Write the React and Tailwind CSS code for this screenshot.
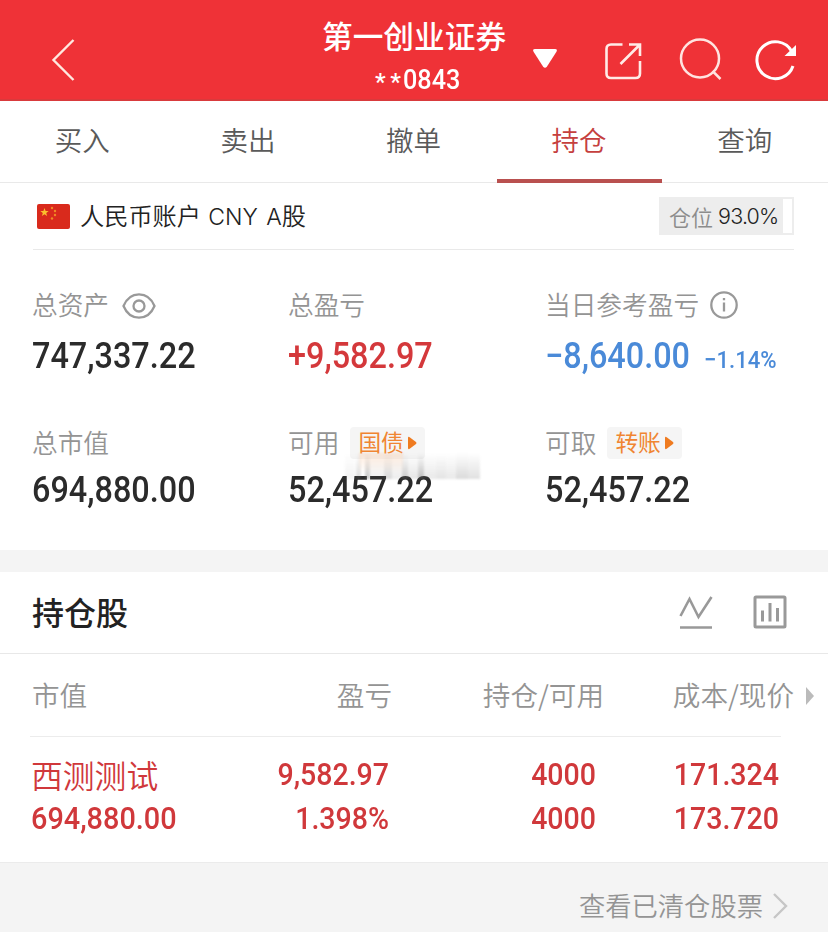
import React from 'react';
import clsx from 'clsx';

const tabs = ['买入', '卖出', '撤单', '持仓', '查询'];

const columns = [
  { label: '市值', className: 'w-[195px] text-left' },
  { label: '盈亏', className: 'w-[165px] text-right' },
  { label: '持仓/可用', className: 'w-[212px] text-right' },
  { label: '成本/现价', className: 'w-[190px] text-right' },
];

// Narrow figures, anchored on the side they are aligned to
const Num = ({ children, right, className }) => (
  <span
    className={clsx(
      "block whitespace-nowrap font-['Roboto',sans-serif] font-medium scale-x-[.9]",
      right ? 'origin-right' : 'origin-left',
      className
    )}
  >
    {children}
  </span>
);

const Header = () => (
  <header className="flex h-[101px] items-center border-b-2 border-[#d93a3c] bg-[#ef3237] text-white">
    <svg className="ml-[50px] mt-5 h-[44px] w-[28px]" viewBox="0 0 28 44" fill="none" stroke="#ffe9e0" strokeWidth="2.4">
      <path d="M23.500 2L3.500 22L23.500 42" />
    </svg>
    <div className="ml-[244px] flex w-[184px] flex-col items-center pt-[13px]">
      <div className="whitespace-nowrap text-[30.7px] font-medium leading-[44px]">第一创业证券</div>
      <div className="flex h-[42px] w-[184px] items-center pl-[53px] pt-[4px] font-['Roboto',sans-serif] leading-[42px]">
        <span className="w-[28px] shrink-0 pt-[4px] text-[24px] font-medium tracking-[4.5px]">**</span>
        <Num className="text-[28px]">0843</Num>
      </div>
    </div>
    <svg className="ml-[26px] mt-[18px] h-[22px] w-[26px]" viewBox="0 0 26 22" fill="#fff">
      <path d="M3 1H23Q26 1 24.3 4L15 18.5Q13 21 11 18.5L1.700 4Q0 1 3 1Z" />
    </svg>
    <svg className="ml-[46px] mt-[22px] h-[38px] w-[38px]" viewBox="0 0 38 38" fill="none" stroke="#ffebe7" strokeWidth="2.600">
      <path d="M18.500 2.500H7Q2.500 2.500 2.500 7V31.500Q2.500 36 7 36H31.500Q36 36 36 31.500V19" />
      <path d="M16.500 22L35 3.500M25 2.500H36V14" />
    </svg>
    <svg className="ml-[37px] mt-5 h-[44px] w-[44px]" viewBox="0 0 44 44" fill="none" stroke="#ffe3e0" strokeWidth="2.500">
      <circle cx="21" cy="20.500" r="19" />
      <path d="M33.500 33L41.500 41" />
    </svg>
    <svg className="ml-[32px] mt-5 h-[42px] w-[42px]" viewBox="0 0 42 42" fill="none" stroke="#fff" strokeWidth="3">
      <path d="M36.500 12A18.500 18.500 0 1 0 38 27" />
      <path d="M41 6V17H29.500Z" fill="#fff" stroke="none" />
    </svg>
  </header>
);

const Tabs = () => (
  <nav className="grid h-[82px] grid-cols-5 border-b border-[#e9e9e9]">
    {tabs.map((tab) => (
      <div
        key={tab}
        className={clsx(
          'h-[82px] border-b-4 pr-px text-center text-[27.5px] font-[350] leading-[77px]',
          tab === '持仓' ? 'border-[#b9504f] text-[#c5403e]' : 'border-transparent text-[#5a5a5a]'
        )}
      >
        {tab}
      </div>
    ))}
  </nav>
);

const Flag = () => (
  <svg className="h-[25px] w-[33px]" viewBox="0 0 33 25">
    <rect width="33" height="25" rx="2" fill="#d92a1c" />
    <path d="M7.500 4L8.600 7H11.700L9.200 8.900L10.100 12L7.500 10.200L4.900 12L5.800 8.900L3.300 7H6.400Z" fill="#fbc02d" />
    <g fill="#ef8a26">
      <circle cx="15" cy="4" r="1.200" />
      <circle cx="18" cy="7" r="1.200" />
      <circle cx="18" cy="11" r="1.200" />
      <circle cx="15" cy="14.500" r="1.200" />
    </g>
  </svg>
);

const Account = () => (
  <div className="ml-[33px] mr-[34px] flex h-[67px] items-center border-b border-[#e9e9e9] pl-1">
    <Flag />
    <div className="-mt-px ml-[10px] whitespace-nowrap text-[24.200px] font-[350] leading-[30px] text-[#222]">
      人民币账户 <span className="ml-[2px] font-['Inter',sans-serif] text-[23px] font-light [word-spacing:2px]">CNY A</span>股
    </div>
    <div className="ml-auto flex h-[38px] w-[135px] border-2 border-[#ededed] bg-white">
      <div className="flex w-[122px] items-center whitespace-nowrap bg-[#ededed] pl-2 text-[22px] leading-[34px]">
        <span className="-mt-px font-[350] text-[#8c8c8c]">仓位</span>
        <span className="ml-[5px] font-['Inter',sans-serif] text-[21.5px] font-light tracking-[-0.8px] text-[#222]">93.0%</span>
      </div>
    </div>
  </div>
);

const Chip = ({ children }) => (
  <span className="ml-[11px] flex h-[32px] w-[75px] items-center rounded bg-[#f5f5f5] pl-[8px] text-[22.7px] font-normal leading-[32px] text-[#f08532]">
    <span className="-mt-[2px]">{children}</span>
    <svg className="ml-[3px] h-[14px] w-[10px] shrink-0" viewBox="0 0 10 14" fill="#ef7b20">
      <path d="M1 2Q1 0 3 1.500L9 6Q10 7 9 8L3 12.500Q1 14 1 12Z" />
    </svg>
  </span>
);

const Stat = ({ label, extra, value, color, note }) => (
  <div>
    <div className="flex h-[36px] items-center whitespace-nowrap text-[25.700px] font-[350] leading-[34px] text-[#949494]">
      <span className="-ml-px -mt-[2px]">{label}</span>
      {extra}
    </div>
    <div className={clsx('flex items-baseline text-[36px] leading-[42px]', color)}>
      <Num className="-ml-px">{value}</Num>
      {note && <Num className="-ml-[2px] text-[24.600px]">{note}</Num>}
    </div>
  </div>
);

const EyeIcon = () => (
  <svg className="ml-[13px] mt-[2px] h-[26px] w-[34px]" viewBox="0 0 34 26" fill="none" stroke="#999" strokeWidth="2.300">
    <path d="M1.500 13C8 -2.500 26 -2.500 32.500 13C26 28.500 8 28.500 1.500 13Z" />
    <circle cx="17" cy="13" r="5.500" />
  </svg>
);

const InfoIcon = () => (
  <svg className="ml-[11px] h-[28px] w-[28px]" viewBox="0 0 28 28" fill="none" stroke="#999" strokeWidth="2.300">
    <circle cx="14" cy="14" r="12.700" />
    <path d="M14 11.500V20.500M14 7V9.300" />
  </svg>
);

// Vertical streaks: [left, width, strength]
const streaks = [
  [0, 10, 0.08], [11, 5, 0.24], [20, 5, 0.36], [25, 14, 0.1], [39, 8, 0.26], [47, 10, 0.12],
  [57, 6, 0.34], [63, 10, 0.16], [73, 6, 0.42], [79, 12, 0.14], [91, 10, 0.18], [101, 10, 0.14],
  [111, 12, 0.24], [123, 12, 0.2],
];

const Smudge = () => (
  <div className="absolute left-[345px] top-[203px] h-[26px] w-[138px] overflow-hidden blur-[1px]">
    {streaks.map(([left, width, opacity]) => (
      <span
        key={left}
        className="absolute inset-y-0 bg-gradient-to-b from-transparent to-[#666]"
        style={{ left, width, opacity }}
      />
    ))}
    <span className="absolute left-[14px] top-0 h-[20px] w-[44px] bg-gradient-to-b from-[#ffb27a]/25 to-transparent" />
  </div>
);

const Summary = () => (
  <section className="relative h-[300px] pl-[33px] pt-[37px]">
    <div className="grid grid-cols-[256px_257px_1fr]">
      <Stat label="总资产" extra={<EyeIcon />} value="747,337.22" color="text-[#2b2b2b] pt-[12px]" />
      <Stat label="总盈亏" value="+9,582.97" color="text-[#d4383b] pt-[12px]" />
      <Stat label="当日参考盈亏" extra={<InfoIcon />} value="−8,640.00" note="−1.14%" color="text-[#4a8ad8] pt-[12px]" />
    </div>
    <div className="mt-[44px] grid grid-cols-[256px_257px_1fr]">
      <Stat label="总市值" value="694,880.00" color="text-[#2b2b2b] pt-[8px]" />
      <Stat label="可用" extra={<Chip>国债</Chip>} value="52,457.22" color="text-[#2b2b2b] pt-[8px]" />
      <Stat label="可取" extra={<Chip>转账</Chip>} value="52,457.22" color="text-[#2b2b2b] pt-[8px]" />
    </div>
    <Smudge />
  </section>
);

const Holdings = () => (
  <section>
    <div className="flex h-[82px] items-center border-b border-[#e8e8e8] pl-[32px] pr-[41px]">
      <h2 className="-mt-[3px] text-[32px] font-medium leading-[40px] text-[#222]">持仓股</h2>
      <svg className="-mt-[2px] ml-auto h-[34px] w-[34px]" viewBox="0 0 34 34" fill="none" stroke="#999" strokeWidth="2.600">
        <path d="M1.500 21L10.500 4L19.500 22L32.500 2M1 32.500H33" />
      </svg>
      <svg className="-mt-[2px] ml-[40px] h-[34px] w-[34px]" viewBox="0 0 34 34" fill="none" stroke="#999" strokeWidth="3">
        <rect x="2" y="2" width="30" height="30" rx="1" />
        <path d="M9.500 15.500V26.500M17 8V26.500M24.500 13V26.500" />
      </svg>
    </div>
    <div className="flex h-[82px] items-center whitespace-nowrap pb-[2px] pl-[32px] text-[27.600px] font-[350] leading-[40px] text-[#949494]">
      {columns.map(({ label, className }) => (
        <div key={label} className={className}>{label}</div>
      ))}
      <svg className="ml-[12px] mt-1 h-[18px] w-[8px]" viewBox="0 0 8 18" fill="#bbb">
        <path d="M0 0L8 9L0 18Z" />
      </svg>
    </div>
    <div className="ml-[30px] mr-[47px] h-px bg-[#ececec]" />
    <div className="flex h-[125px] items-start pl-[31px] pt-[16px] text-[31.700px] leading-[44px] text-[#d0383b]">
      <div className="w-[180px]">
        <div className="-mt-px mb-px whitespace-nowrap text-[31.800px] font-[350]">西测测试</div>
        <Num className="origin-left scale-x-[.91]">694,880.00</Num>
      </div>
      <div className="w-[178px]">
        <Num right className="text-right">9,582.97</Num>
        <Num right className="text-right">1.398%</Num>
      </div>
      <div className="w-[207px]">
        <Num right className="text-right">4000</Num>
        <Num right className="text-right">4000</Num>
      </div>
      <div className="w-[183px]">
        <Num right className="text-right">171.324</Num>
        <Num right className="text-right">173.720</Num>
      </div>
    </div>
  </section>
);

export default function App() {
  return (
    <div className="flex h-[932px] w-[828px] flex-col overflow-hidden bg-white font-['Noto_Sans_CJK_SC',sans-serif]">
      <Header />
      <Tabs />
      <Account />
      <Summary />
      <div className="h-[22px] shrink-0 bg-[#f4f4f4]" />
      <Holdings />
      <footer className="flex flex-1 items-center justify-end border-t border-[#ebebeb] bg-[#f4f4f4] pr-[40px] pt-[16px] text-[26.300px] font-[350] leading-[36px] text-[#949494]">
        <span className="-mt-[2px]">查看已清仓股票</span>
        <svg className="ml-[9px] h-[26px] w-[16px]" viewBox="0 0 16 26" fill="none" stroke="#c6c6c6" strokeWidth="2.400">
          <path d="M2 1L14 13L2 25" />
        </svg>
      </footer>
    </div>
  );
}
